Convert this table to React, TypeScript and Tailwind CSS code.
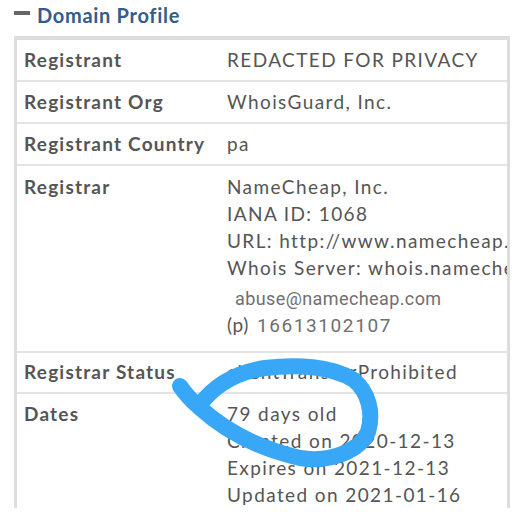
import React from 'react';

const rows: { label: string; value: string }[] = [
  { label: 'Registrant', value: 'REDACTED FOR PRIVACY' },
  { label: 'Registrant Org', value: 'WhoisGuard, Inc.' },
  { label: 'Registrant Country', value: 'pa' },
];

const Scribble = () => (
  <svg
    className="pointer-events-none absolute left-0 top-0"
    width="530"
    height="512"
    viewBox="0 0 530 512"
  >
    <path
      d="M180 386 C186 395 192 401 199 407 C222 428 256 448 300 458 C332 463 360 450 368 432 C374 412 368 392 354 380 C332 366 296 364 265 368 C238 372 215 384 199 406"
      fill="none"
      stroke="#38a7f7"
      strokeWidth="16"
      strokeLinecap="round"
      strokeLinejoin="round"
    />
  </svg>
);

export default function App() {
  return (
    <div className="relative h-[512px] w-[530px] overflow-hidden bg-white font-['Lato','Liberation_Sans',sans-serif] text-[#555]">
      {/* Header */}
      <div className="flex h-[36px] items-start pl-[14px] pt-[3px]">
        <div className="mt-[8px] h-[4px] w-[16px] bg-[#666]" />
        <h2 className="ml-[7px] text-[20px] font-bold leading-[24px] tracking-[0.7px] text-[#335b8c]">
          Domain Profile
        </h2>
      </div>

      {/* Table */}
      <div className="ml-[14px] w-[496px] border-x-[3px] border-t-4 border-[#ddd]">
        {rows.map((r) => (
          <div key={r.label} className="flex h-[42px] items-center border-b-2 border-[#e3e3e3]">
            <div className="w-[210px] shrink-0 pl-[7px] text-[19px] font-bold tracking-[1.2px]">{r.label}</div>
            <div className="overflow-hidden whitespace-nowrap text-[19px] tracking-[1.4px]">{r.value}</div>
          </div>
        ))}

        {/* Registrar */}
        <div className="flex h-[187px] border-b-2 border-[#e3e3e3] pt-[7px]">
          <div className="w-[210px] shrink-0 pl-[7px] text-[19px] font-bold leading-[27px] tracking-[1.2px]">Registrar</div>
          <div className="min-w-0 flex-1 overflow-hidden whitespace-nowrap text-[19px] leading-[27px] tracking-[1.4px]">
            <div>NameCheap, Inc.</div>
            <div>IANA ID: 1068</div>
            <div>URL: http://www.namecheap.com</div>
            <div>Whois Server: whois.namecheap.com</div>
            <div className="mt-[6px] pl-[8px] font-['Roboto',sans-serif] text-[18px] leading-[24px] tracking-[0.4px] text-[#6f6f6f]">
              abuse@namecheap.com
            </div>
            <div className="flex items-baseline leading-[28px]">
              <span className="tracking-[0.6px]">(p)</span>
              <span className="ml-[8px] font-['Roboto',sans-serif] text-[19px] tracking-[1.6px] text-[#6f6f6f]">16613102107</span>
            </div>
          </div>
        </div>

        {/* Registrar Status */}
        <div className="flex h-[41px] items-center border-b-2 border-[#e3e3e3]">
          <div className="w-[210px] shrink-0 pl-[7px] text-[19px] font-bold tracking-[1.2px]">Registrar Status</div>
          <div className="text-[19px] tracking-[1.4px]">clientTransferProhibited</div>
        </div>

        {/* Dates */}
        <div className="flex pt-[6px]">
          <div className="w-[210px] shrink-0 pl-[7px] text-[19px] font-bold leading-[27px] tracking-[1.2px]">Dates</div>
          <div className="text-[19px] leading-[27px] tracking-[1.4px]">
            <div>79 days old</div>
            <div>Created on 2020-12-13</div>
            <div>Expires on 2021-12-13</div>
            <div>Updated on 2021-01-16</div>
          </div>
        </div>
      </div>

      <Scribble />
    </div>
  );
}
